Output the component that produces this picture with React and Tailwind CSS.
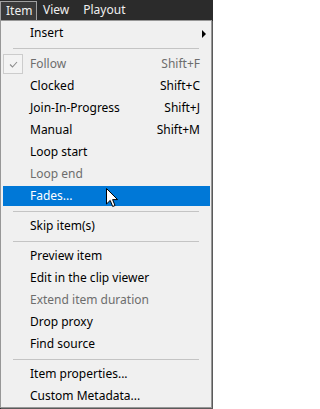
import { Fragment } from "react"

const rows = [
    { label: "Insert", sub: true },
    { sep: true, h: "h-[9px]" },
    { label: "Follow", key: "Shift+F", disabled: true, checked: true },
    { label: "Clocked", key: "Shift+C" },
    { label: "Join-In-Progress", key: "Shift+J" },
    { label: "Manual", key: "Shift+M" },
    { label: "Loop start" },
    { label: "Loop end", disabled: true },
    { label: "Fades...", active: true },
    { sep: true },
    { label: "Skip item(s)" },
    { sep: true },
    { label: "Preview item" },
    { label: "Edit in the clip viewer" },
    { label: "Extend item duration", disabled: true },
    { label: "Drop proxy" },
    { label: "Find source" },
    { sep: true },
    { label: "Item properties..." },
    { label: "Custom Metadata..." },
]

function Cursor() {
    return (
        <svg className="absolute left-[106px] top-[188px]" width="13" height="20" viewBox="0 0 13 20">
            <path d="M0.5 0.5 L0.5 16 L4.2 12.4 L6.7 18.5 L9 17.5 L6.6 11.6 L11.6 11.6 Z" fill="#fff" stroke="#000" strokeWidth="1" strokeLinejoin="miter" />
        </svg>
    )
}

function Row({ item }) {
    if (item.sep) {
        return (
            <div className={`${item.h || "h-[8px]"} flex items-center px-[12px]`}>
                <div className="h-px w-full bg-[#c4c4c4]" />
            </div>
        )
    }
    return (
        <div className="relative h-[22px] flex items-center">
            {item.active && <div className="absolute inset-y-[1px] left-[2px] right-[1px] bg-[#0078d7]" />}
            {item.checked && (
                <div className="absolute left-[2px] top-[1px] w-[20px] h-[20px] border border-[#cccccc] bg-[#f3f3f3] flex items-center justify-center">
                    <svg width="9" height="7" viewBox="0 0 9 7">
                        <path d="M1 3.5 L3.5 6 L8 1" fill="none" stroke="#8c8c8c" strokeWidth="1.1" />
                    </svg>
                </div>
            )}
            <span className={`relative pl-[29px] flex-1 ${item.active ? "text-white" : item.disabled ? "text-[#6d6d6d]" : "text-black"}`}>
                {item.label}
            </span>
            {item.key && (
                <span className={`relative pr-[11px] ${item.disabled ? "text-[#6d6d6d]" : "text-black"}`}>{item.key}</span>
            )}
            {item.sub && (
                <span className="absolute right-[5px] top-[8px] w-0 h-0 border-y-[4px] border-y-transparent border-l-[4px] border-l-black" />
            )}
        </div>
    )
}

export default function App() {
    return (
        <div className="relative w-[213px] h-[409px] overflow-hidden bg-[#2b2b2b] font-['Noto_Sans',sans-serif] text-[12px] leading-none">
            <div className="h-[20px] flex items-stretch text-[#f0f0f0]">
                <div className="mt-[1px] w-[37px] border border-b-0 border-[#a0a0a0] bg-[#3a3a3a] flex items-center pl-[5px]">Item</div>
                <div className="flex items-center pl-[6px]">View</div>
                <div className="flex items-center pl-[14px]">Playout</div>
            </div>
            <div className="w-[212px] h-[388px] bg-[#f0f0f0] border border-[#979797] shadow-[1px_1px_0_#5a5a5a] pt-[1px]">
                {rows.map((item, i) => (
                    <Fragment key={i}>
                        <Row item={item} />
                    </Fragment>
                ))}
            </div>
            <Cursor />
        </div>
    )
}
